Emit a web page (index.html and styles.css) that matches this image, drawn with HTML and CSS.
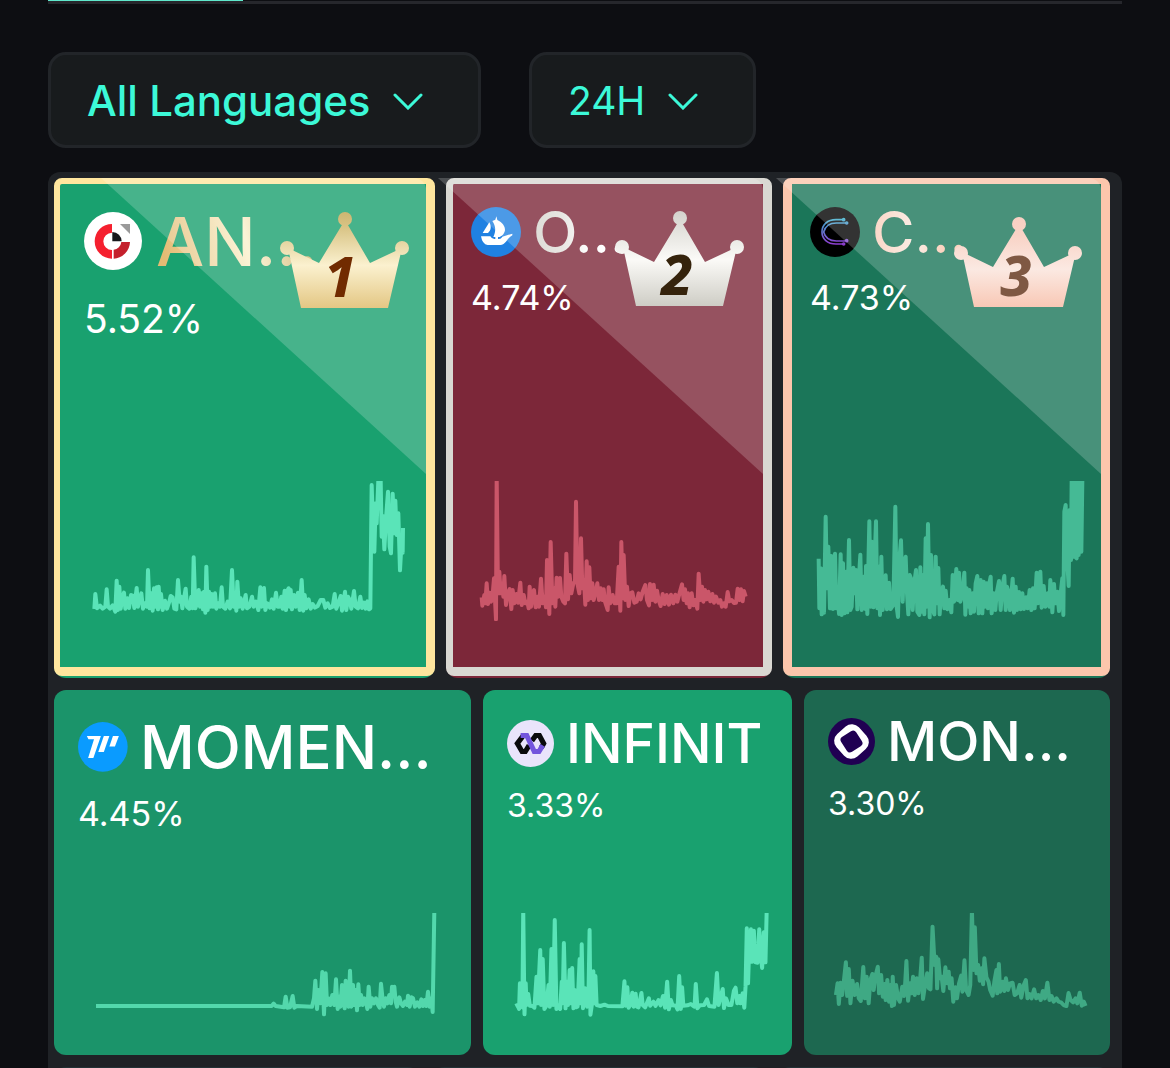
FILE: index.html
```html
<!DOCTYPE html>
<html lang="en">

<head>
    <meta charset="UTF-8">
    <meta name="viewport" content="width=device-width, initial-scale=1">
    <title>Mindshare</title>
    <link rel="stylesheet" href="styles.css">
</head>

<body>
<nav class="tabs"><div class="tab_active"></div></nav>

<div class="filters">
    <label class="filter filter_lang">
        <select aria-label="Language">
            <option>All Languages</option>
        </select>
        <svg class="chevron" viewBox="0 0 30 20"><path d="M2 5 L15 18 L28 5"/></svg>
    </label>
    <label class="filter filter_time">
        <select aria-label="Period">
            <option>24H</option>
        </select>
        <svg class="chevron" viewBox="0 0 30 20"><path d="M2 5 L15 18 L28 5"/></svg>
    </label>
</div>

<main class="treemap">
    <section class="row row_top">
        <article class="card gold">
            <div class="head">
                <svg class="logo" viewBox="0 0 174 174">
                    <circle cx="87" cy="87" r="87" fill="#fff"/>
                    <path d="M84 36 A52 52 0 0 0 84 140 V114 A26 26 0 0 1 84 62 Z" fill="#f5202f"/>
                    <path d="M89 140 A52 52 0 0 0 138 90 H112 A26 26 0 0 1 89 113 Z" fill="#c4202c"/>
                    <path d="M85 60 A28 28 0 0 1 113 88 H85 Z" fill="#17191c"/>
                    <path d="M108 36 H138 V66 Z" fill="#9a9a9a"/>
                </svg>
                <h2>AN...</h2>
            </div>
            <p>5.52%</p>
            <div class="shine"></div>
            <svg class="crown" viewBox="0 0 129 97">
                <defs>
                    <linearGradient id="gold" x1="0" y1="0" x2="0" y2="97" gradientUnits="userSpaceOnUse">
                        <stop offset="0" stop-color="#cdb671"/><stop offset=".15" stop-color="#d8c384"/>
                        <stop offset=".55" stop-color="#fbf1cf"/><stop offset="1" stop-color="#e3c682"/>
                    </linearGradient>
                </defs>
                <g fill="url(#gold)">
                    <path d="M65 8 L90 51 L122 36 L108 96 H21 L8 36 L39 51 Z"/>
                    <circle cx="65" cy="7" r="7"/><circle cx="7" cy="36" r="7"/><circle cx="122" cy="36" r="7"/>
                </g>
                <text x="60" y="85" fill="#712b00">1</text>
            </svg>
            <svg class="chart" viewBox="12 63 1143 420" preserveAspectRatio="none">
                <polyline points="133,447 136,402 141,445 150,437 158,446 166,440 170,388 174,440 180,446 188,436 196,455 200,362 204,450 208,380 212,446 217,415 222,398 226,446 232,415 237,444 243,405 248,407 253,444 260,384 264,440 268,420 274,400 279,446 285,430 291,440 294,330 299,445 304,400 308,452 312,385 316,440 320,382 324,448 326,380 330,440 333,402 338,450 345,422 351,446 358,425 362,408 368,412 373,446 379,448 384,360 389,425 393,410 397,445 402,415 407,386 411,440 418,446 424,410 428,445 431,292 436,445 441,430 446,390 450,440 455,400 459,448 462,395 466,458 469,320 473,450 477,395 481,440 485,402 489,440 495,400 499,446 505,430 510,440 515,382 519,440 526,446 533,425 540,445 546,330 551,440 555,405 559,452 562,365 567,440 572,415 578,446 587,405 591,445 598,440 606,410 611,440 618,425 625,450 631,382 635,440 639,400 642,384 646,450 652,430 660,443 666,418 671,446 678,398 683,440 688,440 694,410 698,446 704,392 708,450 712,392 716,385 719,440 722,390 726,448 732,405 737,440 744,398 749,450 755,360 760,452 764,405 769,445 776,418 782,446 788,432 795,443 803,438 812,420 820,420 826,443 833,430 840,444 848,440 854,402 859,446 865,430 872,408 876,452 880,430 885,395 889,450 894,410 899,420 904,446 912,393 917,440 924,445 931,410 936,444 942,428 947,446 952,424 957,448 961,445 965,75 970,230 973,275 977,130 980,190 985,60 992,60 995,230 999,168 1003,268 1008,175 1014,95 1019,260 1023,280 1028,101 1033,220 1036,122 1040,225 1045,160 1050,331 1055,240 1058,278 1059,204"/>
            </svg>
        </article>

        <article class="card silver">
            <div class="head">
                <svg class="logo" viewBox="0 0 150 150">
                    <circle cx="75" cy="75" r="75" fill="#2081e2"/>
                    <g fill="#fff">
                        <path d="M55 46 C62 58 60 70 51 78 L35 78 Z"/>
                        <path d="M64 42 L73 38 L76 28 L79 39 C94 46 103 58 102 70 Q100 84 86 90 H67 C75 74 75 58 64 42 Z"/>
                        <path d="M73 84 H81 V100 H73 Z"/>
                        <path d="M30 88 H58 Q62 96 70 96 H84 Q90 96 94 89 L124 80 V85 Q112 92 106 103 Q98 114 88 114 H50 Q34 112 30 88 Z"/>
                    </g>
                </svg>
                <h2>O...</h2>
            </div>
            <p>4.74%</p>
            <div class="shine"></div>
            <svg class="crown" viewBox="0 0 129 97">
                <defs>
                    <linearGradient id="silver" x1="0" y1="0" x2="0" y2="97" gradientUnits="userSpaceOnUse">
                        <stop offset="0" stop-color="#d3d2cc"/><stop offset=".5" stop-color="#fbfaf7"/>
                        <stop offset="1" stop-color="#cccbc3"/>
                    </linearGradient>
                </defs>
                <g fill="url(#silver)">
                    <path d="M65 8 L90 51 L122 36 L108 95 H21 L8 36 L39 51 Z"/>
                    <circle cx="65" cy="7" r="7"/><circle cx="7" cy="36" r="7"/><circle cx="122" cy="36" r="7"/>
                </g>
                <text x="62" y="84" fill="#35230c">2</text>
            </svg>
            <svg class="chart" viewBox="18 63 978 420" preserveAspectRatio="none">
                <polyline points="125,412 127,437 133,405 136,430 140,370 144,432 149,398 153,425 157,415 162,355 164,400 168,478 170,50 174,400 178,335 182,400 187,370 190,410 193,348 198,435 203,400 209,387 214,447 218,390 223,430 229,402 234,428 241,368 245,435 251,405 256,430 262,425 266,445 269,380 273,440 278,400 282,390 287,442 292,410 297,440 303,356 308,430 313,410 318,442 321,300 325,400 328,462 332,246 337,430 342,385 346,440 350,353 354,410 360,354 364,410 370,425 375,430 379,281 384,418 389,345 394,400 400,370 405,365 408,125 412,370 418,400 423,235 427,385 432,360 436,434 440,304 444,420 448,322 452,415 457,370 461,420 466,400 472,370 477,420 482,385 487,420 491,388 495,425 503,450 506,382 511,430 518,405 524,430 530,430 536,320 541,452 544,246 548,415 551,285 556,420 561,380 566,438 571,400 577,397 583,428 590,425 596,400 602,418 608,395 616,375 621,420 627,436 630,372 636,420 641,374 646,425 651,392 656,420 662,438 668,402 674,432 680,405 687,434 693,404 700,430 706,404 712,425 719,398 726,373 731,420 735,388 740,430 744,400 749,442 755,400 760,436 765,420 772,446 776,341 781,420 786,380 790,425 795,390 800,418 805,395 811,424 817,402 822,428 828,410 835,428 841,420 846,440 852,430 857,440 863,396 868,424 875,420 882,429 888,428 893,386 898,420 903,388 908,424 912,393 917,410"/>
            </svg>
        </article>

        <article class="card bronze">
            <div class="head">
                <svg class="logo" viewBox="0 0 150 150">
                    <defs>
                        <linearGradient id="camp" x1="0" y1="35" x2="0" y2="115" gradientUnits="userSpaceOnUse">
                            <stop offset="0" stop-color="#38b0cc"/><stop offset="1" stop-color="#9238d0"/>
                        </linearGradient>
                    </defs>
                    <circle cx="75" cy="75" r="75" fill="#000"/>
                    <g fill="none" stroke="url(#camp)" stroke-width="5">
                        <path d="M98 38 H78 C52 38 36 54 36 75 C36 96 52 111 78 111 H98"/>
                        <path d="M106 48 H79 C56 48 45 60 41 75 C45 91 56 102 79 102 H106"/>
                        <circle cx="101" cy="38" r="3"/><circle cx="110" cy="48" r="3"/>
                        <circle cx="110" cy="101" r="3"/><circle cx="101" cy="111" r="3"/>
                    </g>
                </svg>
                <h2>C...</h2>
            </div>
            <p>4.73%</p>
            <div class="shine"></div>
            <svg class="crown" viewBox="0 0 129 97">
                <defs>
                    <linearGradient id="bronze" x1="0" y1="0" x2="0" y2="97" gradientUnits="userSpaceOnUse">
                        <stop offset="0" stop-color="#f8cfc2"/><stop offset=".25" stop-color="#f9d3c6"/>
                        <stop offset=".6" stop-color="#fbe9e2"/><stop offset="1" stop-color="#f8c7b4"/>
                    </linearGradient>
                </defs>
                <g fill="url(#bronze)">
                    <path d="M65 13 L90 56 L122 41 L109 96 H20 L8 41 L39 56 Z"/>
                    <circle cx="65" cy="13" r="7"/><circle cx="7" cy="42" r="7"/><circle cx="121" cy="42" r="7"/>
                </g>
                <text x="62" y="85" fill="#7f5843">3</text>
            </svg>
            <svg class="chart" viewBox="39 63 981 420" preserveAspectRatio="none">
                <polyline points="146,296 148,445 152,325 155,463 158,328 162,458 167,170 171,385 175,260 180,445 184,288 189,447 195,281 199,445 203,390 207,462 212,283 215,465 219,310 223,460 228,335 232,457 237,240 241,450 245,440 250,323 254,400 258,330 262,448 267,350 271,284 275,450 281,350 286,447 288,318 292,462 298,184 302,440 306,245 310,442 314,300 318,184 322,445 327,320 330,465 334,290 338,450 342,400 347,346 351,448 357,368 362,447 370,435 376,140 380,440 384,471 388,300 393,241 398,425 402,310 407,290 411,400 415,463 419,345 424,358 428,450 432,375 438,330 442,455 448,465 451,322 455,455 460,345 463,463 467,235 470,440 474,192 479,472 483,285 487,445 493,463 497,290 501,430 505,324 509,463 513,400 519,380 523,445 527,392 532,448 538,420 544,457 548,345 552,425 559,327 563,420 567,338 571,425 576,410 583,338 586,464 590,385 595,440 598,390 602,460 608,400 612,455 617,370 622,348 626,460 632,360 637,460 641,365 645,440 650,370 654,445 658,370 662,350 665,460 671,400 676,450 680,400 687,363 692,450 697,380 703,348 707,450 711,380 716,400 720,450 728,356 732,458 737,380 741,450 747,396 752,448 757,400 762,447 768,412 773,445 779,390 784,450 789,385 794,445 800,338 804,430 811,335 815,443 821,378 826,440 833,400 838,440 841,360 847,457 852,372 856,430 862,395 867,453 872,400 877,355 880,465 883,155 887,135 891,290 896,378 899,150 903,300 905,60 908,290 912,60 915,290 920,295 922,60 926,285 930,60 934,275 937,60"/>
            </svg>
        </article>
    </section>

    <section class="row row_mid">
        <article class="card momentum">
            <div class="head">
                <svg class="logo" viewBox="0 0 153 153">
                    <circle cx="76" cy="76" r="76" fill="#0a9bff"/>
                    <g fill="#fff">
                        <path d="M27 43 H70 L47 110 H31 L49 53 H32 Z"/>
                        <path d="M79 43 H96 L79 92 H62 Z"/>
                        <path d="M107 43 H125 L113 75 H96 Z"/>
                    </g>
                </svg>
                <h2>MOMEN...</h2>
            </div>
            <p>4.45%</p>
            <svg class="chart" viewBox="12 69 1251 315" preserveAspectRatio="none">
                <polyline points="138,348 665,348 671,341 677,348 702,352 707,320 712,353 720,352 728,318 733,353 740,348 786,350 792,325 796,272 801,357 806,300 811,340 817,246 822,373 827,250 831,345 836,325 841,345 847,315 853,345 858,268 863,357 867,320 871,350 876,285 880,340 884,355 887,272 892,340 896,350 900,242 904,350 909,285 913,345 917,300 921,361 925,283 929,345 933,315 938,345 943,325 948,335 952,357 956,290 961,350 966,325 972,340 978,325 984,345 989,353 993,281 998,330 1002,350 1007,325 1012,340 1018,315 1023,340 1026,290 1030,315 1033,290 1037,335 1041,350 1048,322 1053,340 1059,348 1065,335 1071,345 1074,317 1079,350 1084,322 1089,325 1095,350 1102,337 1108,350 1114,328 1119,348 1124,330 1129,348 1134,305 1139,350 1144,325 1148,366 1153,60"/>
            </svg>
        </article>

        <article class="card infinit">
            <div class="head">
                <svg class="logo" viewBox="0 0 100 100">
                    <circle cx="50" cy="50" r="50" fill="#e9e4fb"/>
                    <g fill="none" stroke-width="11">
                        <path d="M34 34 L22 50 L32 67 H39 L47 54" stroke="#0a0a0c"/>
                        <path d="M53 44 L61 33 H69 L78 50 L73 59" stroke="#0a0a0c"/>
                        <path d="M29 33 H42 L58 67 H68 L76 54" stroke="#7355dd"/>
                    </g>
                </svg>
                <h2>INFINIT</h2>
            </div>
            <p>3.33%</p>
            <svg class="chart" viewBox="7 69 745 315" preserveAspectRatio="none">
                <polyline points="85,348 90,345 94,357 96,280 99,345 102,352 104,60 107,373 110,280 112,345 116,312 120,347 126,348 131,353 136,260 139,340 145,180 147,345 151,207 155,357 160,347 165,285 168,350 172,177 176,345 180,90 184,357 188,345 193,357 197,275 199,340 202,159 206,355 209,275 212,345 216,240 218,340 222,234 225,355 228,300 231,352 235,350 240,207 243,340 245,163 248,355 253,295 258,350 261,340 264,120 266,374 270,340 273,244 276,340 278,258 281,345 290,348 300,344 308,348 343,349 348,274 351,347 355,292 358,353 362,345 367,308 370,350 375,311 378,350 382,352 389,309 392,345 398,352 407,325 410,347 418,335 423,348 430,330 435,346 441,318 446,353 451,275 455,358 460,330 464,346 472,347 476,358 480,258 484,357 487,292 490,347 500,346 508,342 514,348 517,350 520,282 524,355 530,346 540,345 547,328 552,348 565,350 571,249 575,345 580,320 585,297 588,354 593,325 599,345 606,345 612,302 616,293 620,340 625,318 628,340 633,310 637,353 640,290 643,115 646,280 649,170 653,118 656,215 660,122 664,217 669,218 673,118 677,200 680,234 684,127 688,217 691,60"/>
            </svg>
        </article>

        <article class="card monad">
            <div class="head">
                <svg class="logo" viewBox="0 0 100 100">
                    <circle cx="50" cy="50" r="50" fill="#200052"/>
                    <rect x="18" y="18" width="64" height="64" rx="20" fill="#fff" transform="rotate(48 50 50)"/>
                    <rect x="31" y="31" width="38" height="38" rx="8" fill="#200052" transform="rotate(57 50 50)"/>
                </svg>
                <h2>MON...</h2>
            </div>
            <p>3.30%</p>
            <svg class="chart" viewBox="781 69 738 315" preserveAspectRatio="none">
                <polyline points="858,315 862,280 865,342 869,278 873,315 877,275 882,217 885,318 889,237 893,340 898,272 903,315 909,282 913,325 918,333 924,231 928,325 932,260 937,340 941,270 946,252 949,300 953,260 959,230 962,310 967,255 971,320 975,282 978,330 982,270 986,335 989,285 993,348 995,260 998,345 1003,285 1008,325 1012,335 1018,290 1022,318 1025,280 1028,213 1032,332 1037,280 1040,310 1044,260 1048,315 1053,265 1057,310 1061,270 1065,203 1068,327 1073,285 1078,250 1082,295 1086,298 1091,110 1096,225 1100,200 1102,295 1105,208 1109,265 1113,260 1117,303 1122,232 1126,280 1130,245 1133,295 1137,265 1141,335 1146,292 1150,325 1155,280 1160,257 1163,305 1168,211 1172,300 1178,315 1182,285 1186,60 1190,240 1193,112 1197,250 1201,225 1205,272 1209,235 1213,283 1216,205 1221,262 1226,275 1230,300 1236,317 1240,275 1245,240 1247,310 1251,222 1254,305 1260,275 1264,303 1268,265 1273,300 1278,280 1284,278 1289,315 1295,310 1301,285 1305,323 1311,285 1316,270 1320,325 1325,312 1330,325 1336,298 1341,325 1346,315 1352,330 1357,303 1362,325 1368,278 1373,330 1378,318 1383,335 1390,325 1395,335 1401,337 1407,345 1414,348 1419,309 1424,330 1430,337 1436,325 1440,340 1446,308 1451,347 1456,335 1460,348"/>
            </svg>
        </article>
    </section>

    <section class="row row_low">
        <article class="card"></article>
        <article class="card"></article>
        <article class="card"></article>
    </section>
</main>
</body>

</html>
```
FILE: styles.css
```css
* {
    box-sizing: border-box;
}

body {
    margin: 0;
    padding: 0 48px;
    height: 100vh;
    overflow: hidden;
    background-color: #0d0e12;
    color: white;
    font-family: Inter, "Liberation Sans", sans-serif;
}

h2, p {
    margin: 0;
}

.tabs {
    height: 4px;
    border-bottom: 3px solid #26272c;
}

.tab_active {
    width: 195px;
    height: 1px;
    background-color: #5fe8cc;
}

/* filters */

.filters {
    display: flex;
    gap: 48px;
    padding: 48px 0 24px;
}

.filter {
    display: flex;
    align-items: center;
    gap: 22px;
    height: 96px;
    padding: 0 55px 0 36px;
    border: 3px solid #222529;
    border-radius: 18px;
    background-color: #181b1d;
}

.filter select {
    appearance: none;
    border: 0;
    padding: 0;
    background: none;
    color: #3cf9d8;
    font-family: inherit;
    font-size: 39px;
}

.filter_lang select {
    font-size: 42px;
    font-weight: 500;
}

.chevron {
    width: 30px;
    height: 20px;
    fill: none;
    stroke: #3cf9d8;
    stroke-width: 3;
    stroke-linecap: round;
}

/* treemap */

.treemap {
    display: grid;
    gap: 12px;
    padding: 6px 12px 6px 6px;
    border-radius: 12px;
    background-color: #1f2226;
}

.row {
    display: grid;
    gap: 12px;
}

.row_top {
    grid-template-columns: 381fr 326fr 327fr;
    gap: 11px;
}

.row_mid {
    grid-template-columns: 417fr 309fr 306fr;
}

.row_low {
    grid-template-columns: 366fr 334fr 332fr;
}

.card {
    position: relative;
    display: flex;
    flex-direction: column;
    min-width: 0;
    min-height: 365px;
    padding-bottom: 37px;
    border-radius: 12px;
    background-color: #1b946a;
}

.row_top .card {
    min-height: 500px;
    padding-bottom: 57px;
}

.row_low .card {
    background-color: #233236;
}

.head {
    display: flex;
    align-items: center;
    gap: 12px;
    padding: 19px 0 0 24px;
    white-space: nowrap;
}

.card p {
    padding: 11px 0 0 24px;
    font-size: 34px;
    line-height: 40px;
}

h2 {
    font-size: 58px;
    line-height: 70px;
    font-weight: 500;
}

.logo {
    flex: none;
    width: 50px;
    height: 50px;
}

.chart {
    display: block;
    width: 100%;
    height: 105px;
    margin-top: auto;
    fill: none;
    stroke: #53d8ac;
    stroke-width: 4;
    stroke-linejoin: round;
}

.chart polyline {
    vector-effect: non-scaling-stroke;
}

.row_top .chart {
    height: 140px;
}

/* top three: frame, light and crown */

.row_top .card::after {
    content: "";
    position: absolute;
    inset: 0 0 2px;
    border: 9px solid;
    border-top-width: 6px;
    border-radius: 8px;
}

.shine {
    position: absolute;
    z-index: 1;
    top: 0;
    right: 9px;
    width: 325px;
    height: 296px;
    border-top-right-radius: 12px;
    background-color: rgba(255, 255, 255, 0.2);
    clip-path: polygon(0 0, 100% 0, 100% 100%);
}

.crown {
    position: absolute;
    z-index: 2;
    top: 33px;
    right: 28px;
    width: 129px;
    height: 97px;
    overflow: visible;
}

.crown text {
    font-family: "Noto Sans", sans-serif;
    font-size: 56px;
    font-weight: 800;
    font-style: italic;
    text-anchor: middle;
}

.row_top h2 {
    background-clip: text;
    -webkit-background-clip: text;
    color: transparent;
}

.gold {
    background-color: #19a16f;
}

.row_top .gold::after {
    border-color: #ffe69e;
    border-left-width: 6px;
}

.gold .head {
    gap: 14px;
    padding: 22px 0 0 30px;
}

.gold .logo {
    width: 58px;
    height: 58px;
}

.gold h2 {
    font-size: 68px;
    line-height: 82px;
    background-image: linear-gradient(75deg, #e3bb74 8%, #fbf1cd 55%, #d3b673 85%);
}

.gold p {
    padding: 13px 0 0 30px;
    font-size: 39px;
    line-height: 48px;
}

.gold .crown {
    top: 34px;
    right: 26px;
}

.gold .chart,
.infinit .chart {
    stroke: #5ae4b8;
}

.silver {
    background-color: #7c2739;
}

.row_top .silver::after {
    border-color: #d9d8d2;
    border-left-width: 7px;
}

.silver h2 {
    background-image: linear-gradient(90deg, #d5d4cd, #e2e0db 30%, #fff 60%);
}

.silver .head,
.silver p {
    padding-left: 25px;
}

.silver .chart {
    stroke: #ca5669;
}

.bronze {
    background-color: #1b7659;
}

.row_top .bronze::after {
    border-color: #fcc6ac;
}

.bronze h2 {
    background-image: linear-gradient(90deg, #f9cdb9, #f9e8de 45%, #fcc8b0 75%);
}

.bronze .head,
.bronze p {
    padding-left: 27px;
}

.bronze .crown {
    right: 27px;
}

.bronze .chart {
    stroke: #45ba95;
}

/* second row */

.momentum .head {
    padding-top: 21px;
}

.momentum h2 {
    font-size: 60px;
    line-height: 72px;
}

.infinit {
    background-color: #19a16f;
}

.monad .head {
    padding-top: 17px;
}

.infinit .logo,
.monad .logo {
    width: 47px;
    height: 47px;
}

.infinit h2,
.monad h2 {
    font-size: 55px;
    line-height: 68px;
}

.infinit p,
.monad p {
    padding-top: 10px;
    font-size: 32px;
    line-height: 38px;
}

.monad {
    background-color: #1d6850;
}

.monad .chart {
    stroke: #3fa984;
}
```
